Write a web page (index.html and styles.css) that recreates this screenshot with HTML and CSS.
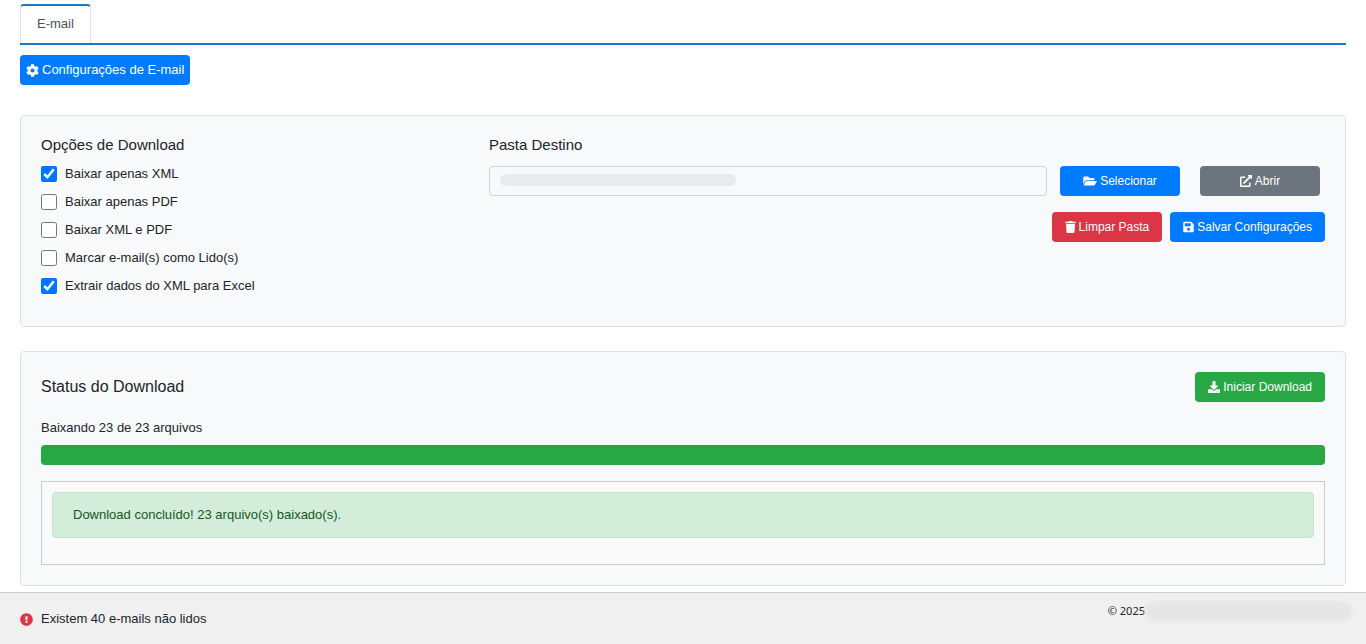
FILE: index.html
```html
<!DOCTYPE html>
<html lang="pt-BR">
<head>
<meta charset="utf-8">
<title>E-mail</title>
<meta name="viewport" content="width=device-width, initial-scale=1">
<link rel="stylesheet" href="styles.css">
</head>
<body>
<main class="page">
  <nav class="tabs">
    <a class="tab" href="#email">E-mail</a>
  </nav>

  <div class="toolbar">
    <button type="button" class="btn btn-primary btn-compact">
      <svg class="icon icon-large" viewBox="0 0 512 512" aria-hidden="true"><path d="M487.4 315.7l-42.6-24.6c4.3-23.2 4.3-47 0-70.2l42.6-24.6c4.9-2.8 7.1-8.6 5.5-14-11.1-35.6-30-67.8-54.7-94.6-3.8-4.1-10-5.1-14.8-2.3L380.8 110c-17.9-15.4-38.5-27.3-60.8-35.1V25.8c0-5.6-3.9-10.5-9.4-11.7-36.7-8.2-74.3-7.8-109.2 0-5.5 1.2-9.4 6.1-9.4 11.7V75c-22.2 7.9-42.8 19.8-60.8 35.1L88.7 85.5c-4.9-2.8-11-1.9-14.8 2.3-24.7 26.7-43.6 58.9-54.7 94.6-1.7 5.4.6 11.2 5.5 14L67.3 221c-4.3 23.2-4.3 47 0 70.2l-42.6 24.6c-4.9 2.8-7.1 8.6-5.5 14 11.1 35.6 30 67.8 54.7 94.6 3.8 4.1 10 5.1 14.8 2.3l42.6-24.6c17.9 15.4 38.5 27.3 60.8 35.1v49.2c0 5.6 3.9 10.5 9.4 11.7 36.7 8.2 74.3 7.8 109.2 0 5.5-1.2 9.4-6.1 9.4-11.7v-49.2c22.2-7.9 42.8-19.8 60.8-35.1l42.6 24.6c4.9 2.8 11 1.9 14.8-2.3 24.7-26.7 43.6-58.9 54.7-94.6 1.5-5.5-.7-11.3-5.6-14.1zM256 336c-44.1 0-80-35.9-80-80s35.9-80 80-80 80 35.9 80 80-35.9 80-80 80z"/></svg>
      <span>Configurações de E-mail</span>
    </button>
  </div>

  <section class="card options">
    <fieldset class="checks">
      <legend class="title">Opções de Download</legend>
      <label class="check"><input type="checkbox" checked> Baixar apenas XML</label>
      <label class="check"><input type="checkbox"> Baixar apenas PDF</label>
      <label class="check"><input type="checkbox"> Baixar XML e PDF</label>
      <label class="check"><input type="checkbox"> Marcar e-mail(s) como Lido(s)</label>
      <label class="check"><input type="checkbox" checked> Extrair dados do XML para Excel</label>
    </fieldset>
    <div class="folder">
      <label class="title" for="pasta">Pasta Destino</label>
      <div class="folder-row">
        <div class="path">
          <input class="path-input" id="pasta" type="text" readonly>
          <span class="path-mask" aria-hidden="true"></span>
        </div>
        <button type="button" class="btn btn-primary btn-wide">
          <svg class="icon icon-folder" viewBox="0 0 576 512" aria-hidden="true"><path d="M572.694 292.093L500.27 416.248A63.997 63.997 0 0 1 444.989 448H45.025c-18.523 0-30.064-20.093-20.731-36.093l72.424-124.155A64 64 0 0 1 152 256h399.964c18.523 0 30.064 20.093 20.73 36.093zM152 224h328v-48c0-26.51-21.49-48-48-48H272l-64-64H48C21.49 64 0 85.49 0 112v278.046l69.077-118.418C86.214 242.25 117.989 224 152 224z"/></svg>
          <span>Selecionar</span>
        </button>
        <button type="button" class="btn btn-secondary btn-wide">
          <svg class="icon" viewBox="0 0 512 512" aria-hidden="true"><path d="M432,320H400a16,16,0,0,0-16,16V448H64V128H208a16,16,0,0,0,16-16V80a16,16,0,0,0-16-16H48A48,48,0,0,0,0,112V464a48,48,0,0,0,48,48H400a48,48,0,0,0,48-48V336A16,16,0,0,0,432,320ZM488,0h-128c-21.37,0-32.05,25.91-17,41l35.73,35.73L135,320.37a24,24,0,0,0,0,34L157.67,377a24,24,0,0,0,34,0L435.28,133.32,471,169c15,15,41,4.5,41-17V24A24,24,0,0,0,488,0Z"/></svg>
          <span>Abrir</span>
        </button>
      </div>
      <div class="folder-actions">
        <button type="button" class="btn btn-danger">
          <svg class="icon icon-narrow" viewBox="0 0 448 512" aria-hidden="true"><path d="M432 32H312l-9.4-18.7A24 24 0 0 0 281.1 0H166.8a23.72 23.72 0 0 0-21.4 13.3L136 32H16A16 16 0 0 0 0 48v32a16 16 0 0 0 16 16h416a16 16 0 0 0 16-16V48a16 16 0 0 0-16-16zM53.2 467a48 48 0 0 0 47.9 45h245.8a48 48 0 0 0 47.9-45L416 128H32z"/></svg>
          <span>Limpar Pasta</span>
        </button>
        <button type="button" class="btn btn-primary">
          <svg class="icon icon-narrow" viewBox="0 0 448 512" aria-hidden="true"><path d="M433.941 129.941l-83.882-83.882A48 48 0 0 0 316.118 32H48C21.49 32 0 53.49 0 80v352c0 26.51 21.49 48 48 48h352c26.51 0 48-21.49 48-48V163.882a48 48 0 0 0-14.059-33.941zM224 416c-35.346 0-64-28.654-64-64 0-35.346 28.654-64 64-64s64 28.654 64 64c0 35.346-28.654 64-64 64zm96-304.52V212c0 6.627-5.373 12-12 12H76c-6.627 0-12-5.373-12-12V108c0-6.627 5.373-12 12-12h228.52c3.183 0 6.235 1.264 8.485 3.515l3.48 3.48A11.996 11.996 0 0 1 320 111.48z"/></svg>
          <span>Salvar Configurações</span>
        </button>
      </div>
    </div>
  </section>

  <section class="card status">
    <div class="status-head">
      <h2 class="title title-large">Status do Download</h2>
      <button type="button" class="btn btn-success">
        <svg class="icon" viewBox="0 0 512 512" aria-hidden="true"><path d="M216 0h80c13.3 0 24 10.7 24 24v168h87.7c17.8 0 26.7 21.5 14.1 34.1L269.7 378.3c-7.5 7.5-19.8 7.5-27.3 0L90.1 226.1c-12.6-12.6-3.7-34.1 14.1-34.1H192V24c0-13.3 10.7-24 24-24zm296 376v112c0 13.3-10.7 24-24 24H24c-13.3 0-24-10.7-24-24V376c0-13.3 10.7-24 24-24h146.7l49 49c20.1 20.1 52.5 20.1 72.6 0l49-49H488c13.3 0 24 10.7 24 24zm-124 88c0-11-9-20-20-20s-20 9-20 20 9 20 20 20 20-9 20-20zm64 0c0-11-9-20-20-20s-20 9-20 20 9 20 20 20 20-9 20-20z"/></svg>
        <span>Iniciar Download</span>
      </button>
    </div>
    <p class="status-text" id="progresso">Baixando 23 de 23 arquivos</p>
    <div class="progress" role="progressbar" aria-labelledby="progresso" aria-valuemin="0" aria-valuemax="23" aria-valuenow="23">
      <div class="progress-bar" style="width: 100%"></div>
    </div>
    <div class="log">
      <div class="alert" role="status">Download concluído! 23 arquivo(s) baixado(s).</div>
    </div>
  </section>
</main>

<footer class="footer">
  <div class="unread">
    <svg class="icon icon-large icon-alert" viewBox="0 0 512 512" aria-hidden="true"><path d="M504 256c0 136.997-111.043 248-248 248S8 392.997 8 256C8 119.083 119.043 8 256 8s248 111.083 248 248zm-248 50c-25.405 0-46 20.595-46 46s20.595 46 46 46 46-20.595 46-46-20.595-46-46-46zm-43.673-165.346l7.418 136c.347 6.364 5.609 11.346 11.982 11.346h48.546c6.373 0 11.635-4.982 11.982-11.346l7.418-136c.375-6.874-5.098-12.654-11.982-12.654h-63.383c-6.884 0-12.356 5.78-11.981 12.654z"/></svg>
    <span>Existem 40 e-mails não lidos</span>
  </div>
  <div class="copyright">
    <span>© 2025</span>
    <span class="owner-mask" aria-hidden="true"></span>
  </div>
</footer>
</body>
</html>
```
FILE: styles.css
```css
* {
  box-sizing: border-box;
}

body {
  display: flex;
  flex-direction: column;
  min-height: 100vh;
  margin: 0;
  background: #fff;
  color: #212529;
  font: 13px/20px "Liberation Sans", Arial, sans-serif;
}

.page {
  flex: 1;
  padding: 4px 20px 6px;
}

.tabs {
  display: flex;
  border-bottom: 2px solid #1976d2;
}

.tab {
  padding: 8px 16px 9px;
  border: 1px solid #dee2e6;
  border-top: 2px solid #1976d2;
  border-bottom: 0;
  border-radius: 4px 4px 0 0;
  color: #495057;
  text-decoration: none;
}

.toolbar {
  display: flex;
  padding: 10px 0 30px;
}

.btn {
  display: inline-flex;
  align-items: center;
  justify-content: center;
  gap: 3px;
  height: 30px;
  padding: 0 13px;
  border: 0;
  border-radius: 4px;
  color: #fff;
  font: 12px/20px "Liberation Sans", Arial, sans-serif;
  white-space: nowrap;
}

.btn-compact {
  padding: 0 6px;
  font-size: 13px;
}

.btn-wide {
  width: 120px;
}

.btn-primary {
  background: #007bff;
}

.btn-secondary {
  background: #6c757d;
}

.btn-danger {
  background: #dc3545;
}

.btn-success {
  background: #28a745;
}

.icon {
  flex: none;
  width: 12px;
  height: 12px;
  fill: currentColor;
}

.icon-large {
  width: 13px;
  height: 13px;
}

.icon-folder {
  width: 14px;
}

.icon-narrow {
  width: 11px;
}

.card {
  border: 1px solid #dee2e6;
  border-radius: 4px;
  background: #f8f9fa;
}

.options {
  display: grid;
  grid-template-columns: 1fr 2fr;
  column-gap: 30px;
  margin-bottom: 24px;
  padding: 20px 20px 22px;
}

.title {
  display: block;
  margin: 0;
  padding: 0;
  font-size: 15px;
  font-weight: 400;
  line-height: 18px;
}

.title-large {
  font-size: 16px;
}

.checks {
  min-width: 0;
  margin: 0;
  padding: 0;
  border: 0;
}

.check {
  display: flex;
  align-items: center;
  gap: 8px;
  height: 20px;
  margin-bottom: 8px;
}

.checks .title {
  margin-bottom: 10px;
}

.check input {
  width: 16px;
  height: 16px;
  margin: 0;
}

.folder-row {
  display: flex;
  gap: 20px;
  margin-top: 12px;
  padding-right: 5px;
}

.path {
  position: relative;
  flex: 1;
  margin-right: -7px;
}

.path-input {
  width: 100%;
  height: 30px;
  padding: 4px 12px;
  border: 1px solid #ced4da;
  border-radius: 4px;
  background: #f8f9fa;
  color: #495057;
  font: inherit;
}

.path-mask {
  position: absolute;
  top: 8px;
  left: 11px;
  width: 236px;
  height: 12px;
  border-radius: 6px;
  background: #e9eaeb;
}

.folder-actions {
  display: flex;
  justify-content: flex-end;
  gap: 8px;
  margin-top: 16px;
}

.status {
  padding: 20px;
}

.status-head {
  display: flex;
  align-items: center;
  justify-content: space-between;
}

.status-text {
  margin: 16px 0 7px;
}

.progress {
  height: 20px;
  overflow: hidden;
  border-radius: 4px;
  background: #e9ecef;
}

.progress-bar {
  height: 100%;
  background: #28a745;
}

.log {
  min-height: 84px;
  margin-top: 16px;
  padding: 10px;
  border: 1px solid #ccc;
  background: #f9f9f9;
}

.alert {
  padding: 12px 20px;
  border: 1px solid #c3e6cb;
  border-radius: 4px;
  background: #d4edda;
  color: #155724;
}

.footer {
  display: flex;
  justify-content: space-between;
  padding: 8px 14px 15px 20px;
  border-top: 1px solid #ccc;
  background: #f0f0f0;
}

.unread {
  display: flex;
  align-items: center;
  gap: 8px;
  padding-top: 8px;
}

.icon-alert {
  color: #dc3545;
}

.copyright {
  display: flex;
  align-items: center;
  height: 20px;
  font: 11px/20px "Noto Sans", sans-serif;
}

.owner-mask {
  width: 207px;
  height: 20px;
  border-radius: 10px;
  background: #e6e6e6;
  filter: blur(2px);
}
```
